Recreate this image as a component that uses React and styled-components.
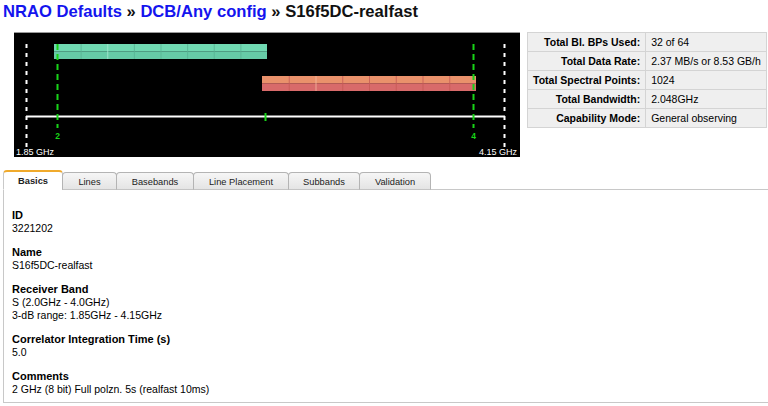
import React from 'react'
import styled, { createGlobalStyle } from 'styled-components'

const GlobalStyle = createGlobalStyle`
  html, body {
    margin: 0;
    padding: 0;
    background: #fff;
    overflow: hidden;
  }
  body {
    font-family: "Liberation Sans", Arial, Helvetica, sans-serif;
    color: #000;
  }
`

const Page = styled.div`
  width: 768px;
  height: 406px;
  overflow: hidden;
`

const Title = styled.h1`
  margin: 0;
  padding: 3px 0 0 3px;
  height: 29px;
  box-sizing: border-box;
  font-size: 16.6px;
  font-weight: bold;
  line-height: 18px;
  color: #111;

  a {
    color: #1414ee;
    text-decoration: none;
  }
`

const TopRow = styled.div`
  display: flex;
  align-items: flex-start;
  padding: 3px 0 0 14px;
  gap: 7px;
`

const Chart = styled.div`
  width: 506px;
  height: 125px;
  background: #000;
  border-top: 1px solid #9a9a9a;
  box-sizing: border-box;

  svg {
    display: block;
  }
`

const Summary = styled.table`
  border-collapse: collapse;
  width: 236px;
  font-size: 10.5px;

  td {
    height: 18px;
    padding: 0 5px;
    border: 1px solid #d4d4d4;
    background: #efefef;
    white-space: nowrap;
  }
`

const Label = styled.td`
  font-weight: bold;
  text-align: right;
  width: 106px;
`

const Tabs = styled.div`
  display: flex;
  align-items: flex-end;
  margin: 13px 0 0 3px;
  height: 20px;
  position: relative;
  z-index: 1;
`

const Tab = styled.div`
  height: ${({ $active }) => ($active ? '20px' : '18px')};
  box-sizing: border-box;
  display: flex;
  align-items: center;
  justify-content: center;
  width: ${({ $w }) => $w}px;
  font-size: 9.3px;
  font-weight: ${({ $active }) => ($active ? 'bold' : 'normal')};
  color: #222;
  border: 1px solid ${({ $active }) => ($active ? '#c9c9c9' : '#b4b4b4')};
  border-top: ${({ $active }) => ($active ? '2px solid #f0aa2c' : '1px solid #b4b4b4')};
  border-bottom: ${({ $active }) => ($active ? '1px solid #fff' : '1px solid #c4c4c4')};
  border-radius: 4px 4px 0 0;
  background: ${({ $active }) =>
    $active ? '#fff' : 'linear-gradient(#f6f6f6, #e4e4e4)'};
  margin-right: -1px;
  padding-top: 1px;
`

const Panel = styled.div`
  margin: -1px -20px 0 3px;
  border: 1px solid #c8c8c8;
  border-right: none;
  padding: 19px 8px 8px 8px;
  font-size: 10.5px;
  line-height: 13px;
  height: 214px;
  box-sizing: border-box;
`

const Field = styled.div`
  margin-bottom: 11px;

  &:last-child {
    margin-bottom: 0;
  }
`

const FieldName = styled.div`
  font-weight: bold;
  font-size: 11px;
`

const FieldValue = styled.div``

const CHART_W = 506
const CHART_H = 124

const Bar = ({ x, y, w, h, top, bottom, mid, lines, light }) => {
  const seg = w / 8
  return (
    <g>
      <rect x={x} y={y} width={w} height={h / 2} fill={top} />
      <rect x={x} y={y + h / 2} width={w} height={h / 2} fill={bottom} />
      <rect x={x} y={y + h / 2 - 0.5} width={w} height={1} fill={mid} />
      {[1, 2, 3, 4, 5, 6, 7].map((i) => (
        <rect
          key={i}
          x={x + seg * i}
          y={y}
          width={1}
          height={h}
          fill={i === 2 ? light : lines}
          opacity={0.8}
        />
      ))}
    </g>
  )
}

const SpectrumChart = () => {
  const green = '#18d418'
  return (
    <svg width={CHART_W} height={CHART_H} viewBox={`0 0 ${CHART_W} ${CHART_H}`}>
      <Bar x={40} y={11} w={213} h={15} top="#70d9b2" bottom="#66cba7" mid="#4f9e84" lines="#57b393" light="#a8ead2" />
      <Bar x={248} y={43} w={214} h={15} top="#e9916b" bottom="#d86a6a" mid="#b35a55" lines="#c65a55" light="#f4b9a0" />

      {/* axis */}
      <line x1={12} y1={83.5} x2={491} y2={83.5} stroke="#fff" strokeWidth={2} />
      <line x1={12.5} y1={11} x2={12.5} y2={114} stroke="#fff" strokeWidth={2} strokeDasharray="4 5" />
      <line x1={490.5} y1={11} x2={490.5} y2={114} stroke="#fff" strokeWidth={2} strokeDasharray="4 5" />

      {/* tunings */}
      <line x1={43.5} y1={11} x2={43.5} y2={95} stroke={green} strokeWidth={2} strokeDasharray="6 4" />
      <line x1={459.5} y1={11} x2={459.5} y2={95} stroke={green} strokeWidth={2} strokeDasharray="6 4" />
      <line x1={251.5} y1={80} x2={251.5} y2={88} stroke={green} strokeWidth={2} />

      <text x={43.5} y={106} fill={green} fontSize="8.5" fontWeight="bold" textAnchor="middle" fontFamily="Liberation Sans, Arial, sans-serif">2</text>
      <text x={459.5} y={106} fill={green} fontSize="8.5" fontWeight="bold" textAnchor="middle" fontFamily="Liberation Sans, Arial, sans-serif">4</text>

      <text x={2} y={122} fill="#fff" fontSize="9" fontFamily="Liberation Sans, Arial, sans-serif">1.85 GHz</text>
      <text x={503} y={122} fill="#fff" fontSize="9" textAnchor="end" fontFamily="Liberation Sans, Arial, sans-serif">4.15 GHz</text>
    </svg>
  )
}

const summary = [
  ['Total Bl. BPs Used:', '32 of 64'],
  ['Total Data Rate:', '2.37 MB/s or 8.53 GB/h'],
  ['Total Spectral Points:', '1024'],
  ['Total Bandwidth:', '2.048GHz'],
  ['Capability Mode:', 'General observing'],
]

const tabs = [
  ['Basics', 60],
  ['Lines', 55],
  ['Basebands', 78],
  ['Line Placement', 96],
  ['Subbands', 72],
  ['Validation', 72],
]

const fields = [
  ['ID', ['3221202']],
  ['Name', ['S16f5DC-realfast']],
  ['Receiver Band', ['S (2.0GHz - 4.0GHz)', '3-dB range: 1.85GHz - 4.15GHz']],
  ['Correlator Integration Time (s)', ['5.0']],
  ['Comments', ['2 GHz (8 bit) Full polzn. 5s (realfast 10ms)']],
]

const App = () => {
  return (
    <Page>
      <GlobalStyle />
      <Title>
        <a href="#">NRAO Defaults</a> » <a href="#">DCB/Any config</a> » S16f5DC-realfast
      </Title>
      <TopRow>
        <Chart>
          <SpectrumChart />
        </Chart>
        <Summary>
          <tbody>
            {summary.map(([k, v]) => (
              <tr key={k}>
                <Label>{k}</Label>
                <td>{v}</td>
              </tr>
            ))}
          </tbody>
        </Summary>
      </TopRow>
      <Tabs>
        {tabs.map(([name, w], i) => (
          <Tab key={name} $w={w} $active={i === 0}>
            {name}
          </Tab>
        ))}
      </Tabs>
      <Panel>
        {fields.map(([name, values]) => (
          <Field key={name}>
            <FieldName>{name}</FieldName>
            {values.map((v) => (
              <FieldValue key={v}>{v}</FieldValue>
            ))}
          </Field>
        ))}
      </Panel>
    </Page>
  )
}

export default App
